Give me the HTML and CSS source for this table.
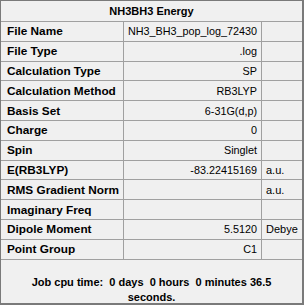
FILE: index.html
```html
<!DOCTYPE html>
<html>
<head>
<meta charset="utf-8">
<link rel="stylesheet" href="styles.css">
</head>
<body>
<div class="panel">
  <div class="title">NH3BH3 Energy</div>
  <div class="grid">
    <div class="lbl">File Name</div><div class="val">NH3_BH3_pop_log_72430</div><div class="unit"></div>
    <div class="lbl">File Type</div><div class="val">.log</div><div class="unit"></div>
    <div class="lbl">Calculation Type</div><div class="val">SP</div><div class="unit"></div>
    <div class="lbl">Calculation Method</div><div class="val">RB3LYP</div><div class="unit"></div>
    <div class="lbl">Basis Set</div><div class="val">6-31G(d,p)</div><div class="unit"></div>
    <div class="lbl">Charge</div><div class="val">0</div><div class="unit"></div>
    <div class="lbl">Spin</div><div class="val">Singlet</div><div class="unit"></div>
    <div class="lbl">E(RB3LYP)</div><div class="val">-83.22415169</div><div class="unit">a.u.</div>
    <div class="lbl">RMS Gradient Norm</div><div class="val"></div><div class="unit">a.u.</div>
    <div class="lbl">Imaginary Freq</div><div class="val"></div><div class="unit"></div>
    <div class="lbl">Dipole Moment</div><div class="val">5.5120</div><div class="unit">Debye</div>
    <div class="lbl">Point Group</div><div class="val">C1</div><div class="unit"></div>
  </div>
  <div class="footer">Job cpu time:&nbsp; 0 days&nbsp; 0 hours&nbsp; 0 minutes 36.5 seconds.</div>
</div>
</body>
</html>
```
FILE: styles.css
```css
html, body {
  margin: 0;
  padding: 0;
  background: #f0f0f0;
}
.panel {
  width: 304px;
  height: 305px;
  box-sizing: border-box;
  border: 1px solid #7a7a7a;
  border-right-width: 2px;
  border-bottom-width: 2px;
  background: #f0f0f0;
  font-family: "Liberation Sans", Arial, sans-serif;
  font-size: 11px;
  color: #000;
  display: flex;
  flex-direction: column;
}
.title {
  height: 20px;
  line-height: 21px;
  text-align: center;
  font-weight: bold;
  border-bottom: 1px solid #a0a0a0;
}
.grid {
  display: grid;
  grid-template-columns: 123px 138px 1fr;
  grid-auto-rows: 19.8px;
}
.grid > div {
  border-bottom: 1px solid #a0a0a0;
  display: flex;
  align-items: center;
  white-space: nowrap;
  overflow: hidden;
}
.lbl {
  font-weight: bold;
  font-size: 11.8px;
  padding-left: 6px;
  border-right: 1px solid #a0a0a0;
}
.val {
  justify-content: flex-end;
  padding-right: 4px;
  border-right: 1px solid #a0a0a0;
  font-size: 10.8px;
}
.unit {
  padding-left: 4px;
}
.footer {
  flex: 1;
  font-weight: bold;
  text-align: center;
  padding: 15px 26px 0 26px;
  line-height: 15px;
}
```
